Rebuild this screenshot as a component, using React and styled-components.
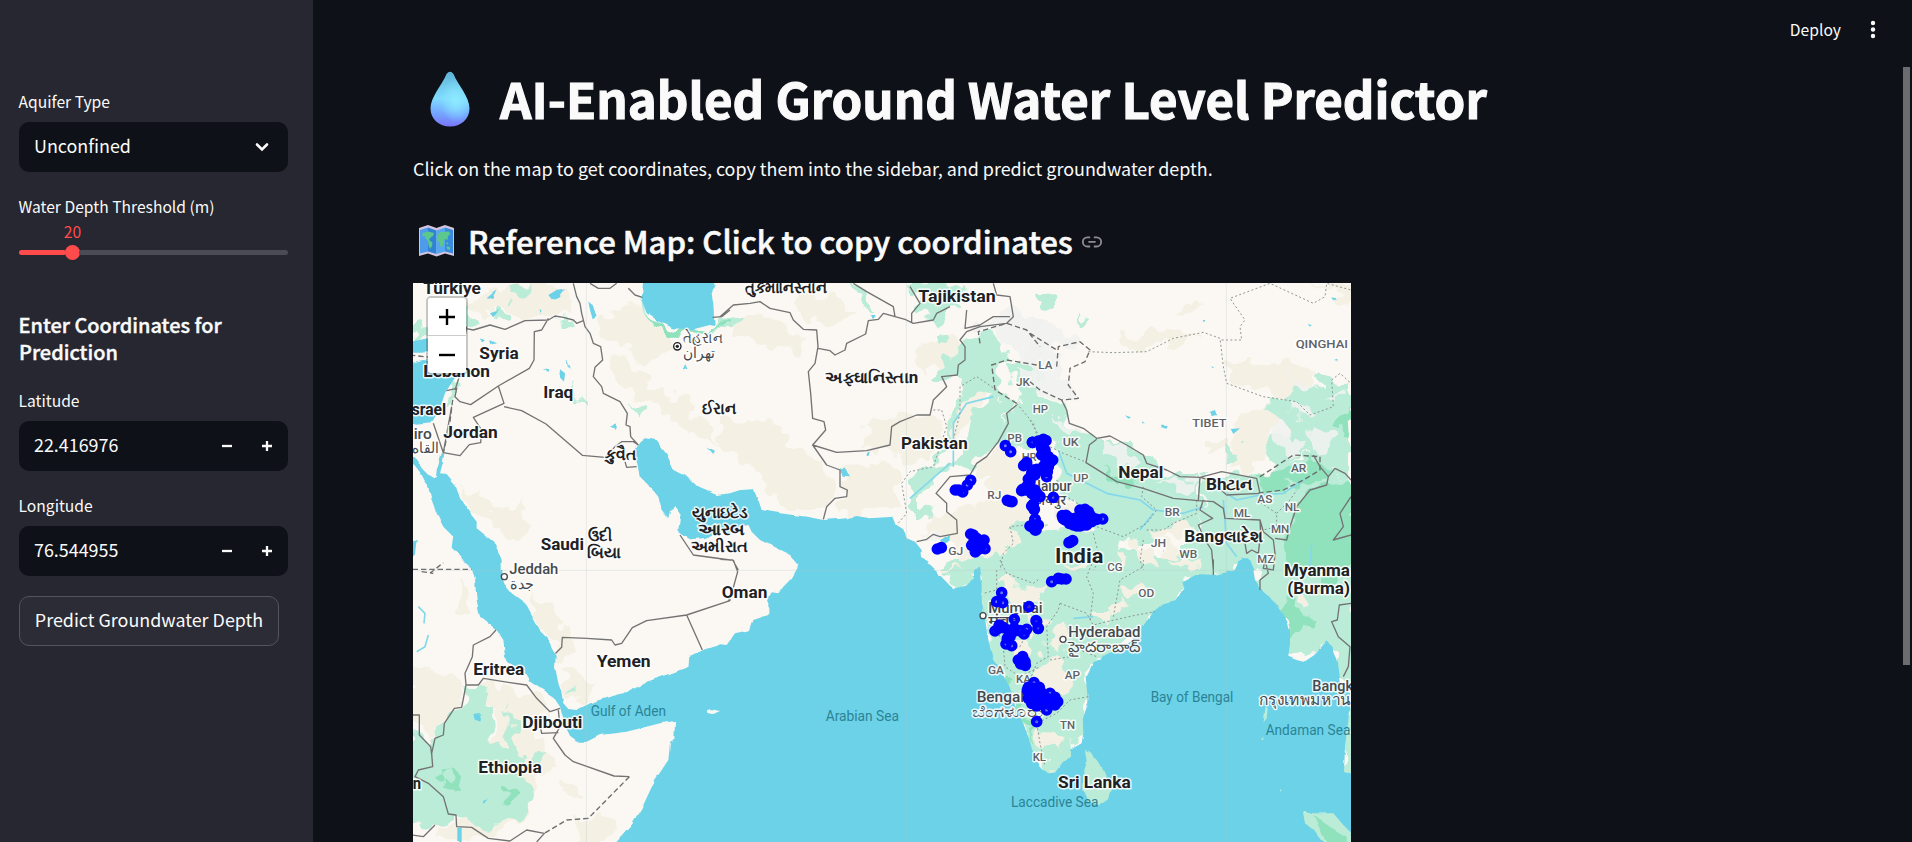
import React from "react";
import styled, { createGlobalStyle } from "styled-components";

const UI_FONT = '"Noto Sans CJK SC", "Noto Sans", sans-serif';

const GlobalStyle = createGlobalStyle`
  * { box-sizing: border-box; }
  body { margin: 0; background: #0e1117; color: #fafafa; font-family: ${UI_FONT}; overflow: hidden; }
  h1, h2, p { margin: 0; }
`;

const Page = styled.div`
  display: flex;
  height: 842px;
  overflow: hidden;
`;

const Sidebar = styled.aside`
  width: 313px;
  flex: none;
  background: #262730;
  padding: 89px 25px 0 19px;
`;

const Field = styled.div`
  margin-bottom: ${(p) => p.$gap}px;
`;

const Label = styled.div`
  height: 33px;
  line-height: 25px;
  font-size: 15.65px;
  white-space: nowrap;
  text-indent: -0.5px;
`;

const Control = styled.div`
  display: flex;
  align-items: center;
  height: 50px;
  padding: 0 ${(p) => p.$right}px 0 15px;
  border-radius: 10px;
  background: #0e1117;
  font-size: 17.9px;
  line-height: 28px;
`;

const Value = styled.span`
  flex: 1;
  margin-top: -4px;
`;

const StepButton = styled.button`
  width: 40px;
  height: 48px;
  padding: 0;
  border: 0;
  background: none;
  display: flex;
  align-items: center;
  justify-content: center;
`;

const SliderValue = styled.div`
  width: 107px;
  margin-top: -8px;
  height: 26px;
  line-height: 25px;
  font-size: 15.65px;
  text-align: center;
  color: #ff4b4b;
`;

const Slider = styled.div`
  display: flex;
  align-items: center;
  height: 15px;
`;

const Track = styled.div`
  height: 5px;
  border-radius: 3px;
  width: ${(p) => p.$width}px;
  background: ${(p) => (p.$active ? "#ff4b4b" : "#4a4b55")};
`;

const Thumb = styled.div`
  width: 15px;
  height: 15px;
  border-radius: 50%;
  background: #ff4b4b;
  margin: 0 -1px;
  flex: none;
`;

const SideHeading = styled.h2`
  font-size: 19.95px;
  line-height: 27px;
  font-weight: 500;
  height: 54px;
  margin-bottom: 23px;
  text-indent: -0.5px;
  -webkit-text-stroke: 0.4px #fafafa;
`;

const PredictButton = styled.button`
  height: 50px;
  width: 260px;
  padding: 0 0 4px;
  border: 1px solid #53545c;
  border-radius: 10px;
  background: #2b2c36;
  color: #fafafa;
  font: 400 17.9px/28px ${UI_FONT};
  white-space: nowrap;
`;

const Main = styled.main`
  flex: 1;
  min-width: 0;
  display: flex;
  flex-direction: column;
`;

const Toolbar = styled.header`
  height: 67px;
  flex: none;
  display: flex;
  justify-content: flex-end;
  padding: 17px 33px 0 0;
  gap: 26px;
  font-size: 15.65px;
  line-height: 25px;
`;

const Body = styled.div`
  display: flex;
  flex: 1;
  min-height: 0;
`;

const Content = styled.div`
  flex: 1;
  padding-left: 100px;
`;

const Scrollbar = styled.div`
  width: 7px;
  height: 598px;
  margin-right: 2px;
  background: #6b6c70;
`;

const Title = styled.h1`
  display: flex;
  align-items: center;
  height: 66px;
  padding-left: 17px;
  gap: 30px;
  margin-top: -1px;
  font-size: 49.2px;
  line-height: 64px;
  font-weight: 700;
  white-space: nowrap;
  -webkit-text-stroke: 1.1px #fafafa;

  span { margin-top: -2px; }
`;

const Intro = styled.p`
  height: 30px;
  margin-top: 21px;
  font-size: 17.92px;
  line-height: 30px;
  white-space: nowrap;
`;

const Subtitle = styled.h2`
  display: flex;
  align-items: center;
  height: 42px;
  margin: 37px 0 21px;
  padding-left: 6px;
  font-size: 31.1px;
  line-height: 42px;
  font-weight: 500;
  white-space: nowrap;
  -webkit-text-stroke: 0.6px #fafafa;
`;

const SubtitleText = styled.span`
  margin: 0 8px 0 14px;
`;

const MapFrame = styled.div`
  position: relative;
  width: 938px;
  height: 559px;
  overflow: hidden;
  background: #fbf8f3;
`;

const MapSvg = styled.svg`
  display: block;
  width: 938px;
  height: 559px;
  font-family: Roboto, "Noto Sans", sans-serif;
`;

const ZoomControl = styled.div`
  position: absolute;
  left: 13px;
  top: 13px;
  width: 42px;
  border: 2px solid rgba(0, 0, 0, 0.2);
  border-radius: 5px;
  background-clip: padding-box;
`;

const ZoomButton = styled.button`
  display: flex;
  align-items: center;
  justify-content: center;
  width: 38px;
  height: ${(p) => (p.$divided ? 38 : 37)}px;
  padding: 0;
  border: 0;
  border-bottom: ${(p) => (p.$divided ? "1px solid #ccc" : "0")};
  border-radius: ${(p) => (p.$divided ? "3px 3px 0 0" : "0 0 3px 3px")};
  background: #fff;
`;

/* Origins of the six map sheets, in map units (three units to a pixel). */
const SHEETS = { A: [-9, -9], B: [921, -9], C: [1851, -9], D: [-9, 831], E: [921, 831], F: [1851, 831] };

function points(text) {
  let origin = SHEETS.A;
  const out = [];
  text.trim().split(/\s+/).forEach((t) => {
    if (SHEETS[t]) origin = SHEETS[t];
    else {
      const [x, y] = t.split(",").map(Number);
      out.push([x + origin[0], y + origin[1]]);
    }
  });
  return out;
}
const toPath = (text, close) => "M" + points(text).map((p) => p.join(" ")).join("L") + (close ? "Z" : "");

const BEIGE = [
  "A 170,60 230,50 290,15 420,10 490,30 500,90 420,105 330,120 290,80 230,100 180,95",
  "A 640,60 690,75 720,120 780,160 800,220 700,260 650,200 600,180 560,120 620,110",
  "A 590,210 640,230 700,300 760,330 830,360 870,430 900,450 930,500 880,480 820,440 770,410 700,360 650,320 600,260",
  "A 150,620 180,640 210,610 230,670 260,690 340,660 360,740 320,780 270,760 240,720 200,700 160,660",
  "B 30,120 110,100 190,130 260,190 240,230 170,190 110,200 60,170",
  "B 0,400 80,440 160,420 220,500 280,520 340,590 350,640 310,690 220,690 160,660 120,580 60,540 0,500",
  "B 340,540 420,560 500,540 540,580 540,690 440,700 350,700 380,640",
  "B 440,440 520,410 620,400 660,420 650,520 560,560 500,500 430,510",
  "B 210,60 300,40 420,90 380,120 290,120",
  "B 580,220 640,180 700,160 720,190 680,260 620,260",
  "B 720,340 770,300 830,330 800,360 740,440 700,470 710,400",
  "B 660,700 750,690 880,640 960,610 960,830 860,850 700,850 700,760 620,760 640,700",
  "C 250,180 350,150 450,150 520,170 400,200 300,210",
  "C 420,90 500,60 520,80 460,110",
  "C 590,230 700,250 800,250 870,290 830,330 880,360 960,300 960,360 870,420 740,350 640,320 590,300",
  "C 640,390 740,370 730,470 700,540 660,590 600,560 610,470",
  "C 530,470 590,480 600,515 540,520",
  "C 820,10 900,30 960,80 960,20",
  "D 0,330 60,320 100,340 160,380 150,440 110,480 60,530 20,480 0,470",
  "D 150,60 190,80 190,170 140,160",
  "D 350,80 420,150 450,210 500,210 490,270 450,300 440,240 400,220 370,160",
  "D 450,330 500,340 560,370 540,410 490,430 460,400",
  "D 180,370 300,380 370,400 430,450 370,500 400,570 440,620 370,680 350,780 240,830 80,846 80,800 150,780 240,650 260,520 250,440",
  "D 450,660 520,700 500,720 460,690",
  "D 500,790 570,760 620,790 600,846 510,846",
  "E 650,30 690,20 760,10 750,60 710,80 670,50",
];

const GREEN = [
  "A 8,150 55,140 60,175 8,185",
  "A 170,80 195,80 190,135 170,140",
  "A 690,40 700,90 740,120 790,150 860,150 920,140 960,120 960,140 900,165 830,160 760,150 700,110 686,70",
  "A 290,20 360,15 370,30 300,60",
  "A 260,90 300,100 290,120 240,110",
  "A 430,110 500,115 500,140 460,130",
  "A 105,330 125,290 150,300 140,350 120,370",
  "A 665,372 700,385 695,415 680,400",
  "A 490,300 510,350 505,390 490,350",
  "B 0,130 55,110 60,120 30,150 0,150",
  "B 395,10 430,40 470,85 460,90 410,50",
  "B 560,10 720,10 730,80 650,120 600,100 580,40",
  "B 720,190 790,160 850,180 870,230 830,270 840,330 890,370 860,420 850,470 800,500 770,560 690,560 650,600 600,640 600,670 650,700 600,725 570,670 570,600 610,565 680,555 740,490 760,400 830,350 760,340 720,400 690,500 650,560 680,480 700,400 730,330 720,300 640,300 680,240",
  "B 645,160 670,150 675,180 650,190",
  "B 860,250 920,240 960,300 960,500 890,520 830,490 870,410 900,370",
  "C 0,330 60,360 100,370 110,420 150,450 200,480 180,550 260,600 350,620 430,650 510,660 520,700 510,750 420,760 360,780 290,780 260,840 180,870 60,870 0,830 0,750 80,750 190,740 130,680 80,600 80,500 0,480",
  "C 200,480 260,480 340,530 420,580 510,590 510,660 430,650 350,620 260,600 170,550",
  "C 520,600 600,580 680,600 780,540 850,520 900,570 960,590 960,870 540,870 500,870 400,870 280,870 340,830 420,840 510,780 520,760",
  "C 35,40 60,50 60,80 45,80",
  "C 140,105 175,120 165,130 145,125",
  "C 710,390 790,330 870,320 870,280 930,320 960,310 960,590 880,560 820,520 730,570 710,510 770,440",
  "C 580,505 630,510 625,540 580,540",
  "D 170,375 250,400 240,440 250,530 290,550 330,600 360,680 370,720 340,780 240,800 170,770 80,790 0,810 0,510 60,540 90,500 130,450 160,440",
  "D 290,440 310,460 315,520 330,570 310,600 290,560",
  "D 340,590 415,585 380,620 340,630",
  "D 470,390 500,375 495,400",
  "B 870,720 960,760 960,870 650,870 700,840 790,820 900,800",
  "E 670,40 740,30 760,50 730,80 700,85",
  "E 780,15 860,-30 960,-40 960,625 930,560 900,470 870,390 840,335 820,300 805,240 785,120",
  "F 0,-20 150,-30 270,-30 600,-30 650,10 600,35 550,45 500,42 465,60 460,85 440,120 400,130 370,155 330,215 280,260 225,285 190,310 170,350 175,400 175,430 158,480 160,520 155,550 125,570 120,590 95,610 75,638 55,640 0,600",
  "F 660,-20 983,-20 983,420 925,340 905,265 885,240 850,285 820,305 775,290 780,210 765,170 740,130 700,95 675,60",
  "F 945,470 990,440 990,660 970,640 942,630",
];

const DEEP_GREEN = [
  "A 700,90 750,130 820,145 900,140 960,130 960,140 870,155 800,165 740,140",
  "C 670,600 760,570 850,530 890,570 870,610 790,610 710,640",
  "C 800,690 860,620 910,610 960,600 963,870 770,870 775,780",
  "C 200,560 260,590 340,610 330,625 250,605",
  "C 960,360 930,420 940,470 965,480",
  "F 780,80 800,140 830,170 870,180 850,210 800,190 790,250 770,180 750,140",
  "F 860,20 930,10 900,90 880,110",
  "D 100,640 140,650 150,700 110,680",
  "D 290,700 315,705 310,720 290,720",
  "E 850,340 880,380 900,430 930,490 955,560 920,500 880,430",
];

const SNOW = [
  "B 740,150 800,120 870,90 960,130 960,260 910,250 870,190 810,150",
  "B 880,270 930,270 960,310 930,330 890,300",
  "C 0,110 60,150 150,170 180,200 90,190 80,230 100,290 140,350 100,370 20,330 0,300",
  "C 80,400 120,430 160,450 130,470 90,440",
  "C 760,360 820,380 870,400 840,420 780,400",
  "C 720,430 760,420 780,480 830,510 800,520 750,490",
  "C 850,440 920,450 900,500 850,510 840,480",
  "C 880,350 950,340 930,370",
  "C 210,480 260,490 330,550 300,560 230,520",
  "C 380,590 500,600 500,640 430,620",
  "C 770,290 820,300 850,330 800,325",
  "B 600,785 640,770 690,770 650,790",
  "F 850,270 885,250 880,280 830,300",
];

/* Dry patches that lie over the green plains. */
const DRY = [
  "B 700,690 790,670 880,640 960,610 960,720 880,730 860,810 790,820 700,850 690,800 640,760 690,740",
  "B 740,400 760,380 740,440 710,470 720,430",
  "B 840,480 900,510 870,570 800,600 760,570 800,530",
  "B 880,520 920,600 960,640 830,690 780,620",
  "C 290,790 320,770 340,790 310,810", "C 360,750 420,740 480,735 510,755 470,775 420,760 400,780 370,775",
  "C 310,800 370,810 380,850 340,850 320,830", "C 400,780 440,790 450,830 410,820", "C 270,810 290,840 240,860",
  "C 90,650 130,680 150,720 110,740 70,710", "C 430,835 500,840 510,860 450,860",
  "E 830,65 870,55 900,80 960,90 960,130 920,120 890,150 850,110",
  "E 880,225 920,240 945,290 910,330 880,300", "E 900,150 950,170 930,190",
  "F 60,210 110,190 110,230 90,290 60,280 50,250", "F 20,310 80,310 120,340 110,390 60,380 30,400 0,360",
  "F 240,140 280,110 275,150 240,170", "F 270,90 320,70 370,100 300,110", "F 20,510 60,520 110,555 80,570 30,540",
  "F 0,90 60,70 40,100 0,120", "F 0,170 40,180 30,220 0,240", "F 800,90 830,100 828,150 810,130",
  "F 100,20 160,10 170,30 120,40", "F 190,150 240,150 220,200", "F 60,625 75,620 72,636",
];

const SEA = [
  "A 700,0 695,60 710,100 740,120 790,145 850,148 900,135 914,138 912,110 910,70 905,40 915,20 910,0",
  "A 0,185 70,172 70,215 30,218 0,218",
  "A 0,250 40,240 80,245 140,270 130,300 105,340 90,385 70,420 60,430 20,434 0,430",
  "A 0,530 15,532 40,570 55,585 70,595 78,590 80,570 95,520 103,520 98,550 90,580 110,582 135,612 150,655 175,690 200,722 200,745 250,785 275,840 275,870 D 278,30 275,50 285,75 305,100 345,130 370,175 390,210 415,235 425,265 437,285 435,320 445,370 455,400 460,430 475,447 500,450 550,425 600,410 640,400 660,385 690,385 710,365 770,345 835,320 838,290 880,270 920,258 E 0,253 20,255 45,220 90,210 100,180 145,165 145,115 155,97 175,100 190,80 215,55 232,25 235,5 B 232,850 210,825 160,800 120,780 95,755 85,735 60,740 30,760 A 930,755 880,775 840,778 815,762 805,750 812,700 795,678 780,690 775,715 755,690 745,650 720,620 690,590 680,545 672,510 690,485 705,475 740,480 770,520 790,570 830,590 860,620 920,645 B 30,640 60,630 100,628 115,660 125,690 180,700 260,710 310,720 380,715 410,708 450,715 520,710 530,735 550,748 560,775 585,785 605,810 605,830 630,850 E 625,12 650,35 700,88 740,75 765,55 765,25 780,20 785,60 785,120 795,180 805,240 820,300 845,335 870,390 890,450 910,490 930,550 950,605 F 30,622 55,640 75,638 95,610 120,590 120,570 155,550 160,520 158,480 175,430 175,400 170,350 190,310 210,300 225,285 280,260 330,215 345,190 370,155 400,130 440,120 460,85 455,65 500,42 550,45 600,35 630,30 640,-5 655,-5 670,30 675,60 700,95 740,130 765,170 780,210 780,250 775,290 800,300 820,305 850,285 885,250 888,240 905,265 920,300 925,340 930,370 960,400 955,480 945,560 942,635 970,645 1010,880 D 590,880 660,800 700,735 735,660 775,600 780,550 793,535 795,482 750,490 650,515 570,525 530,545 500,545 480,530 465,500 455,460 450,440 430,410 390,385 360,365 345,340 300,310 285,290 280,240 260,210 235,190 210,170 200,120 195,60 185,25 155,-5 A 185,870 155,830 125,800 130,770 100,740 80,700 65,660 55,620 40,600 30,580 15,560 0,545",
  "A 415,45 440,30 465,25 445,50 425,58",
  "A 535,65 548,75 560,110 548,118 540,90",
  "A 450,268 465,280 462,305 448,290", "A 402,265 418,268 415,277", "A 467,235 480,270 470,260",
  "A 230,55 262,28 250,60", "A 240,100 268,90 250,112", "A 815,268 825,248 833,265",
  "A 890,500 915,512 910,522", "A 5,785 20,780 15,820 5,830", "A 600,440 622,430 618,446",
  "A 210,175 225,185 215,190", "A 238,180 258,190 240,195", "A 388,88 398,92 392,100",
  "B 360,565 375,563 390,592 368,590", "B 443,515 452,520 448,532 443,530",
  "B 660,780 690,762 688,785 670,795", "B 455,105 470,105 462,114",
  "C 540,395 555,390 560,405 545,408", "C 602,447 630,445 610,462", "C 393,437 413,438 410,446 395,444",
  "C 285,406 303,412 295,416", "C 905,55 920,57 915,65", "C 912,240 925,235 925,243",
  "C 540,256 553,260 545,262", "C 518,123 530,123 524,130", "C 335,420 342,430 333,430",
  "C 610,875 625,845 645,835 665,860 660,875", "C 833,132 845,135 840,140",
  "D 190,465 213,462 208,485 195,480", "D 142,803 155,803 155,846 142,846", "D 218,725 233,712 222,733",
];

const ISLANDS = [
  ["#fbf8f3", "D 887,453 900,447 930,453 910,462 895,460"],
  ["#bbecd8", "F 165,570 180,575 205,605 225,640 243,690 235,715 205,735 175,725 160,690 160,630 170,600"],
  ["#bbecd8", "F 818,752 850,760 910,760 940,795 965,820 965,850 880,850 850,810 825,790"],
  ["#90e2bd", "F 850,765 900,800 950,830 950,850 890,850"],
  ["#bbecd8", "F 707,440 713,445 710,475 700,488"],
  ["#bbecd8", "F 693,535 700,528 700,538"],
  ["#bbecd8", "F 748,688 755,690 752,695"],
];

const BORDERS = [
  "A 490,10 500,50 510,70 515,100 525,140 540,160 550,190 572,200 578,240 555,262 550,290 575,320 580,340 630,365 652,400 648,435 660,440 662,470 685,495",
  "A 165,145 190,150 240,135 285,148 345,122 415,120 435,108 460,112 490,120 500,130 520,122",
  "A 415,115 395,150 373,155 372,240 358,265 265,318 182,374 150,365 135,350 140,325 110,332",
  "A 265,318 282,370 190,412 215,450 212,488 178,494 150,527 100,518 125,380",
  "A 282,380 335,392 408,432 517,526 585,532 615,500 635,485 670,485 685,495",
  "A 70,430 100,518", "A 645,545 650,562 680,560",
  "A 170,140 165,170 155,230 148,290 135,330",
  "A 540,10 565,25 600,25 620,10", "A 655,25 675,45 697,52", "A 908,112 935,110 960,90",
  "B 0,110 40,75 90,70 120,65 150,85 210,98 220,120 250,148 290,150 294,200 285,250 265,275 272,340 278,415 312,425 317,450 278,495 320,555 360,570 360,620 382,630 380,650 345,655 320,680 310,718",
  "B 294,205 330,212 345,225 375,210 380,190 437,162 445,122 475,118 490,100 555,118 580,130 640,120 650,100 690,80",
  "B 278,495 350,517 440,512 510,495 515,440 540,425 590,405 630,405 640,360 680,320 665,290 712,285 715,255 735,240 735,200 720,180 740,155 780,140 860,130 880,110 870,50 830,45 820,10",
  "B 400,10 440,35 520,80 525,110", "B 575,125 575,100 600,70 570,20", "B 740,90 735,145 780,135 820,110 870,110",
  "B 890,375 860,400 865,430 835,485 800,530 770,550 750,585 690,590 648,640 680,670 680,695 710,720 712,760 660,770 640,763 620,778 590,785",
  "C 95,360 110,390 118,430 160,445 200,475 240,468 290,495 340,525 350,550 410,570 450,590 510,592 575,575 680,595 690,640 590,645 540,600 510,592 505,662 430,655 340,625 260,605 168,548 178,495 200,478",
  "C 505,662 550,665 580,685 585,715 690,720 692,760 685,820 665,810 650,820 645,790",
  "C 520,660 510,690 548,715 505,735 525,780 545,810 550,870 F 550,0 550,45",
  "C 690,720 700,755 730,780 735,820 730,870 700,865 F 705,0 715,40 690,60 690,90",
  "C 735,775 770,780 780,740 800,680 840,630 890,615 895,590 870,560 850,525",
  "C 895,590 915,565 945,580 963,600", "C 963,650 930,700 940,740 910,780 963,765",
  "F 963,130 928,135 922,180 905,185 925,230 960,260 955,320 940,350",
  "D 437,280 455,262 457,232 530,235 605,240 615,255 635,250 667,203 710,182 830,165 960,122",
  "D 830,165 877,270", "D 960,122 960,118 E 25,122 38,90 53,35 40,0", "B 0,838 38,840 55,870",
  "D 258,210 240,230 190,255 187,290 165,340 168,375 205,375 220,355 300,368 350,375 380,415 420,455 450,445",
  "D 168,375 155,442 133,445 103,490 100,525 75,535 65,580 68,620 25,630 15,650 55,670 100,710 115,762 138,765 140,800 185,802 235,835 300,843 350,810 403,820 380,846",
  "D 8,465 28,465 28,525 62,560 65,585", "D 8,825 40,830 75,795",
  "D 445,450 450,500 430,535 465,585 490,605 612,648 658,650", "D 392,505 395,520 445,518",
  "A 810,765 850,825 960,840",
];

const DASHED = [
  "D 658,650 535,775 470,780 403,820", "D 8,28 185,28", "D 60,40 100,8", "D 35,35 70,40",
  "A 128,360 118,440 100,518", "A 0,225 60,232",
  "B 780,190 775,155 860,130 920,150 960,200", "B 890,370 825,330 815,255 860,240 950,255",
  "C 80,260 85,200 150,185 180,210 165,245 120,265 115,315 145,355 95,360 30,330 0,305", "C 0,160 80,210",
  "C 690,590 790,525 870,530 870,570 820,600 760,630 680,640",
];

const STATE_LINES = [
  "B 890,370 940,430 960,500", "B 830,330 770,290 720,320 720,400 700,480", "B 640,390 665,390 680,440 640,560 570,575 545,610 560,700 530,735",
  "C 175,215 250,218 350,215 430,175 520,157 570,175 580,260 590,310 700,350 800,365 840,405 910,380 905,300 930,280 963,310",
  "C 575,180 635,180 630,140 645,120 600,55 720,10 850,70 885,50 890,10 963,30",
  "C 0,420 40,490 100,520 165,545", "C 80,600 110,650 190,700 200,740 280,770 350,730 380,690 335,650 340,620",
  "C 350,750 400,750 430,730 500,700 500,660", "C 340,780 330,840 340,870", "C 190,760 210,840 190,870",
  "B 960,730 870,740 880,790 850,820 840,870", "E 840,0 860,40 940,70 960,55", "E 830,30 830,90 790,100",
  "F 90,130 170,160 190,195 230,185 320,165 375,155", "F 90,130 85,150 50,200 55,290 20,310 0,360", "F 60,300 120,290 150,270 200,290",
  "F 180,180 190,100 170,50 190,0", "F 250,170 270,60 340,20 340,0", "F 175,410 120,420 80,460 20,490 30,550 45,620",
  "E 850,260 855,320 900,350 960,320", "E 820,190 850,250 900,260 920,220 960,200",
  "C 680,660 740,700 740,740 700,750", "C 740,700 780,660 800,630",
];

const RIVERS = ["B 700,560 700,430 740,370 820,350", "B 570,655 690,550", "C 85,510 110,580 230,640 330,660 370,690 460,700 520,680", "C 590,640 620,660 690,645 760,640 820,600", "C 580,660 590,790 620,830", "C 330,750 370,700", "F 190,170 130,175", "D 25,140 45,160 42,190", "D 55,225 45,260 20,275", "C 840,870 845,790"];

const DARK = "#202124";
const GREY = "#5f6368";
const SEA_TEXT = "#2b8496";

const COUNTRIES = [
  ["A", 40, 42, "Türkiye", 172], ["A", 208, 236, "Syria", 118], ["A", 40, 292, "Lebanon", 200], ["A", 400, 354, "Iraq", 90],
  ["A", 5, 404, "srael", 103], ["A", 100, 474, "Jordan", 163], ["A", 586, 540, "કુવૈત", 94], ["A", 875, 402, "ઈરાન", 103],
  ["A", 392, 811, "Saudi", 130], ["A", 535, 782, "ઉદી", 72], ["A", 530, 834, "બિયા", 102],
  ["A", 845, 713, "યુનાઇટેડ", 170], ["A", 865, 764, "આરબ", 140], ["A", 843, 817, "અમીરાત", 172],
  ["B", 75, 38, "તુર્કમાનિસ્તાન", 245], ["B", 595, 65, "Tajikistan", 232], ["B", 315, 310, "અફઘાનિસ્તાn", 280], ["B", 543, 507, "Pakistan", 200],
  ["C", 265, 594, "Nepal", 135], ["C", 528, 630, "Bhટાન", 140], ["C", 463, 785, "Bangલાદેશ", 236],
  ["D", 190, 346, "Eritrea", 153], ["D", 560, 322, "Yemen", 162], ["D", 337, 503, "Djibouti", 180], ["D", 205, 638, "Ethiopia", 190], ["D", 8, 686, "n", 25],
  ["E", 5, 113, "Oman", 137], ["F", 84, 683, "Sri Lanka", 218], ["F", 762, 49, "Myanma", 198], ["F", 772, 102, "(Burma)", 188],
];
const CITIES = [
  ["A", -14, 478, "airo", 79], ["A", 5, 520, "القاه", 82], ["A", 820, 190, "તેહરાન", 118], ["A", 820, 234, "تهران", 94],
  ["D", 298, 43, "Jeddah", 147], ["D", 300, 86, "جدة", 72], ["C", 10, 634, "Jaipur", 115], ["C", 15, 676, "जयपुर", 93],
  ["E", 805, 158, "Mumbai", 163], ["E", 805, 197, "मुंबई", 90], ["E", 770, 427, "Bengaluru", 210], ["E", 755, 470, "ಬೆಂಗಳೂರು", 215],
  ["F", 115, 232, "Hyderabad", 216], ["F", 115, 276, "హైదరాబాద్", 216], ["F", 847, 393, "Bangk", 122], ["F", 686, 435, "กรุงเทพมหาน", 276],
];
const STATES = [
  ["B", 888, 318, "JK", 42], ["B", 862, 485, "PB", 44], ["B", 905, 542, "HR", 45], ["B", 802, 657, "RJ", 42], ["B", 685, 826, "GJ", 45],
  ["C", 25, 268, "LA", 42], ["C", 8, 400, "HP", 46], ["C", 98, 497, "UK", 48], ["C", 130, 607, "UP", 45], ["C", 487, 441, "TIBET", 102], ["C", 797, 205, "QINGHAI", 157],
  ["C", 783, 575, "AR", 46], ["C", 682, 670, "AS", 45], ["C", 764, 693, "NL", 44], ["C", 611, 712, "ML", 50], ["C", 723, 760, "MN", 55], ["C", 404, 708, "BR", 45],
  ["C", 362, 801, "JH", 46], ["C", 448, 835, "WB", 54], ["C", 682, 850, "MZ", 50], ["C", 232, 872, "CG", 46],
  ["E", 804, 343, "GA", 48], ["E", 888, 370, "KA", 44], ["F", 8, 603, "KL", 40], ["F", 90, 508, "TN", 45], ["F", 104, 358, "AP", 46], ["F", 325, 111, "OD", 48],
];
const SEAS = [
  ["D", 542, 467, "Gulf of Aden", 226], ["E", 317, 482, "Arabian Sea", 220], ["F", 362, 426, "Bay of Bengal", 248], ["F", 707, 524, "Andaman Sea", 254], ["E", 873, 741, "Laccadive Sea", 262],
];

const WELLS = `B 856,497 872,515 937,487 752,601 742,615 728,636 716,630 706,630 862,661 870,664 876,665 652,807 664,803
752,762 760,765 762,785 755,796 775,790 792,780 795,806 782,800 766,816 770,800 916,552 911,557 920,548
770,775 785,790 775,808 788,785 760,798
950,568 938,580 925,597 908,628 905,632 920,620 935,635 950,640 935,678 943,688 945,718 930,738 945,750 955,735
C 8,487 25,483 40,478 48,482 38,495 35,505 35,525 45,525 55,530 68,540 62,545 55,560 52,575 50,590 35,570 20,572 5,580 0,605 0,625 15,630 20,640 30,650
8,570 15,585 -5,620 5,640 -12,630 45,510 30,490 48,545 40,560
70,652 10,672 12,688 15,718 5,740 18,750 15,735 97,707 99,715 105,720 115,712 125,720 150,690 165,688 175,695 180,705 150,705 130,735 150,738 170,735 185,725 140,720 160,720
108,706 118,730 135,715 145,730 165,708 175,718 160,735 190,715 140,738 165,725
200,718 218,717 117,788 128,782 122,786
E 845,98 830,125 848,128 927,140 883,178 838,195 825,213 835,205 850,203 865,210 883,205 880,215 900,212 920,208 912,222 950,185 955,205 862,235 858,252 875,257 870,230 908,290 895,300 905,300 915,305 916,316 902,312
F 65,65 85,55 95,57 108,57 18,182 24,205 12,368 28,382 -5,382 -8,390 10,400 0,405 -5,415 10,425 25,415 40,405 60,400 50,415 75,412 83,425 75,435 60,435 40,430 20,438 50,450 10,385 20,485
5,430 18,405 32,395 30,432 42,418 62,418 68,428 52,428 72,422 -4,400 12,412 20,422 35,408`;

function Labels({ items, size, weight, color, halo = true }) {
  return items.map(([sheet, x, y, text, width]) => (
    <text
      key={text}
      x={SHEETS[sheet][0] + x}
      y={SHEETS[sheet][1] + y}
      fontSize={size}
      fontWeight={weight}
      fill={color}
      textLength={width}
      lengthAdjust="spacingAndGlyphs"
      stroke={halo ? "rgba(255,255,255,0.85)" : "none"}
      strokeWidth={halo ? 9 : 0}
      strokeLinejoin="round"
      paintOrder="stroke"
    >
      {text}
    </text>
  ));
}

const Shapes = ({ list, fill, opacity }) => list.map((s) => <path key={s} d={toPath(s, true)} fill={fill} opacity={opacity} />);
const Lines = ({ list, ...rest }) => <path d={list.map((s) => toPath(s)).join("")} fill="none" strokeLinejoin="round" {...rest} />;

/* Roughens outlines so that terrain and coasts look natural. */
const Rough = ({ id, frequency, scale, octaves }) => (
  <filter id={id} x="0" y="0" width="2814" height="1677" filterUnits="userSpaceOnUse" colorInterpolationFilters="sRGB">
    <feTurbulence type="fractalNoise" baseFrequency={frequency} numOctaves={octaves} seed="4" />
    <feDisplacementMap in="SourceGraphic" scale={scale} xChannelSelector="R" yChannelSelector="G" />
  </filter>
);

function ReferenceMap() {
  return (
    <MapFrame>
      <MapSvg viewBox="0 0 2814 1677">
        <defs>
          <Rough id="terrain" frequency="0.02" scale="80" octaves="2" />
          <Rough id="coast" frequency="0.03" scale="14" octaves="1" />
        </defs>
        <g filter="url(#terrain)">
          <Shapes list={BEIGE} fill="#f4f0e4" />
          <Shapes list={GREEN} fill="#bbecd8" />
          <Shapes list={DEEP_GREEN} fill="#90e2bd" />
          <Shapes list={SNOW} fill="#f1f2f0" opacity="0.9" />
          <Shapes list={DRY} fill="#f4f0e4" />
        </g>
        <g filter="url(#coast)">
          <Shapes list={SEA} fill="#6bd2e8" />
          {ISLANDS.map(([fill, s]) => <path key={s} d={toPath(s, true)} fill={fill} />)}
        </g>
        <Lines list={RIVERS} stroke="#83d9ea" strokeWidth="5" />
        <Lines list={STATE_LINES} stroke="#8d9693" strokeWidth="3" strokeDasharray="6 7" />
        <Lines list={DASHED} stroke="#6b6b6b" strokeWidth="4" strokeDasharray="16 9" />
        <Lines list={BORDERS} stroke="#737373" strokeWidth="4" />
        <path d="M520 0V1677M1480 0V1677M2440 0V1677M0 862H2814" stroke="#b5c9cb" strokeOpacity="0.3" strokeWidth="3" />
        <Labels items={STATES} size={34} weight={500} color={GREY} />
        <Labels items={CITIES} size={44} weight={500} color="#45494d" />
        <Labels items={SEAS} size={44} weight={400} color={SEA_TEXT} halo={false} />
        <Labels items={COUNTRIES} size={49} weight={700} color={DARK} />
        <Labels items={[["C", 75, 848, "India", 145]]} size={62} weight={700} color={DARK} />
        {points("D 283,50 E 789,167 F 99,238").map(([x, y]) => (
          <circle key={x} cx={x} cy={y} r="9" fill="#fff" stroke="#45494d" strokeWidth="4" />
        ))}
        <circle cx="793" cy="190" r="11" fill="#fff" stroke={DARK} strokeWidth="4" />
        <circle cx="793" cy="190" r="5" fill={DARK} />
        {points(WELLS).map(([x, y], i) => (
          <circle key={i} cx={x} cy={y} r="11" fill="#0000ff" fillOpacity="0.5" stroke="#0000ff" strokeWidth="13" />
        ))}
      </MapSvg>
      <ZoomControl>
        <ZoomButton $divided aria-label="Zoom in">
          <svg width="16" height="16"><path d="M8 0V16M0 8H16" stroke="#000" strokeWidth="2.4" /></svg>
        </ZoomButton>
        <ZoomButton aria-label="Zoom out">
          <svg width="16" height="16"><path d="M0 8H16" stroke="#000" strokeWidth="2.4" /></svg>
        </ZoomButton>
      </ZoomControl>
    </MapFrame>
  );
}

const DropIcon = () => (
  <svg width="40" height="56" viewBox="0 0 40 56">
    <defs>
      <linearGradient id="drop" x1="0.5" y1="0" x2="0.45" y2="1">
        <stop offset="0" stopColor="#5fb4d6" />
        <stop offset="0.5" stopColor="#7fdcff" />
        <stop offset="0.8" stopColor="#74a0ff" />
        <stop offset="1" stopColor="#7b74fb" />
      </linearGradient>
      <radialGradient id="shine" cx="0.65" cy="0.52" r="0.4">
        <stop offset="0" stopColor="#8deaff" />
        <stop offset="1" stopColor="#8deaff" stopOpacity="0" />
      </radialGradient>
    </defs>
    <path d="M16.5 3Q20-1.5 23.5 3C28 14 39.5 26 39.5 37.5C39.5 48 31 55.5 20 55.5S.5 48 .5 37.5C.5 26 12 14 16.5 3Z" fill="url(#drop)" />
    <path d="M16.5 3Q20-1.5 23.5 3C28 14 39.5 26 39.5 37.5C39.5 48 31 55.5 20 55.5S.5 48 .5 37.5C.5 26 12 14 16.5 3Z" fill="url(#shine)" />
  </svg>
);

const WorldMapIcon = () => (
  <svg width="35" height="32" viewBox="0 0 35 32">
    <path d="M0 3L9 0 17.5 3 26 0 35 3V31L26 28.5 17.5 31.5 9 28.5 0 31Z" fill="#d4c5df" />
    <path d="M1 5L9 2.5V26.5L1 28.5Z" fill="#4d9bea" />
    <path d="M9 2.5L17.5 5.5V29L9 26.5Z" fill="#2f83d5" />
    <path d="M17.5 5.5L26 2.5V26.5L17.5 29Z" fill="#55a7f2" />
    <path d="M26 2.5L34 5V28.5L26 26.5Z" fill="#398cdd" />
    <path d="M3.5 8L9 6.5 15 8 14 11 11.5 12.5 10 15 13.5 17.5 13 21 11 24 9.5 20 9 16 6.5 13.5 5.5 10.5 3.5 12Z" fill="#5cc88c" />
    <path d="M19 10L21 7 30 6.5 31.5 9 29 11 28.5 15 26 14 25 16 24 21 21.5 22 20.5 17 17.5 15.5 18 12.5ZM27 17L29.5 18 28 20ZM27.5 21.5L31 22V25L28 24Z" fill="#5cc88c" />
  </svg>
);

const LinkIcon = () => (
  <svg width="22" height="22" viewBox="0 0 24 24" fill="none" stroke="#8b8d92" strokeWidth="2">
    <path d="M10 8H7a5 5 0 0 0 0 10h3M14 8h3a5 5 0 0 1 0 10h-3M8 13h8" />
  </svg>
);

const Minus = () => <svg width="12" height="12"><path d="M1 6H11" stroke="#fafafa" strokeWidth="2.3" /></svg>;
const Plus = () => <svg width="12" height="12"><path d="M1 6H11M6 1V11" stroke="#fafafa" strokeWidth="2.3" /></svg>;

function NumberField({ label, value, gap }) {
  return (
    <Field $gap={gap}>
      <Label>{label}</Label>
      <Control $right={1}>
        <Value>{value}</Value>
        <StepButton aria-label="Decrease"><Minus /></StepButton>
        <StepButton aria-label="Increase"><Plus /></StepButton>
      </Control>
    </Field>
  );
}

export default function App() {
  return (
    <>
      <GlobalStyle />
      <Page>
        <Sidebar>
          <Field $gap={22}>
            <Label>Aquifer Type</Label>
            <Control $right={19}>
              <Value>Unconfined</Value>
              <svg width="14" height="10" viewBox="0 0 14 10"><path d="M2 2.5L7 7.5 12 2.5" fill="none" stroke="#fafafa" strokeWidth="2.6" strokeLinecap="round" /></svg>
            </Control>
          </Field>
          <Field $gap={51}>
            <Label>Water Depth Threshold (m)</Label>
            <SliderValue>20</SliderValue>
            <Slider>
              <Track $width={47} $active />
              <Thumb />
              <Track $width={209} />
            </Slider>
          </Field>
          <SideHeading>Enter Coordinates for<br />Prediction</SideHeading>
          <NumberField label="Latitude" value="22.416976" gap={22} />
          <NumberField label="Longitude" value="76.544955" gap={20} />
          <PredictButton>Predict Groundwater Depth</PredictButton>
        </Sidebar>
        <Main>
          <Toolbar>
            <span>Deploy</span>
            <svg width="12" height="25"><g fill="#fafafa"><circle cx="6" cy="6" r="2.2" /><circle cx="6" cy="12.5" r="2.2" /><circle cx="6" cy="19" r="2.2" /></g></svg>
          </Toolbar>
          <Body>
            <Content>
              <Title><DropIcon /><span>AI-Enabled Ground Water Level Predictor</span></Title>
              <Intro>Click on the map to get coordinates, copy them into the sidebar, and predict groundwater depth.</Intro>
              <Subtitle>
                <WorldMapIcon />
                <SubtitleText>Reference Map: Click to copy coordinates</SubtitleText>
                <LinkIcon />
              </Subtitle>
              <ReferenceMap />
            </Content>
            <Scrollbar />
          </Body>
        </Main>
      </Page>
    </>
  );
}
